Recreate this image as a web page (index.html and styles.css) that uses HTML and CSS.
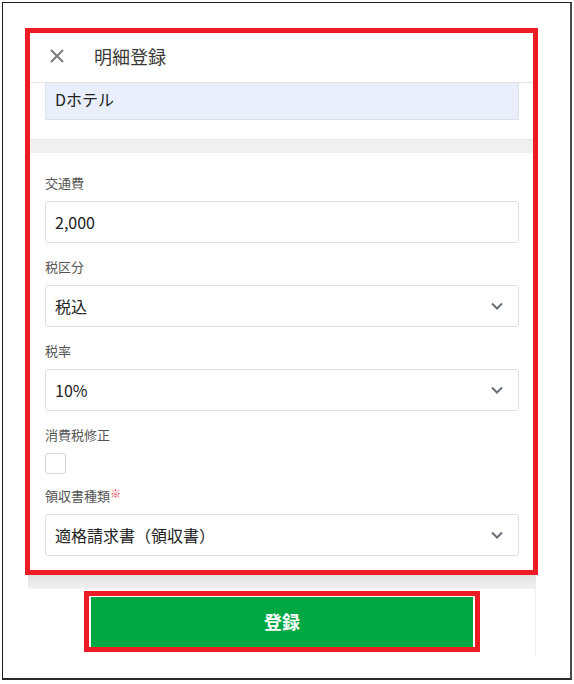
FILE: index.html
```html
<!DOCTYPE html>
<html lang="ja">
<head>
<meta charset="utf-8">
<title>明細登録</title>
<link rel="stylesheet" href="styles.css">
</head>
<body>
<div class="frame">
  <div class="annot">
    <div class="header">
      <svg class="close" width="16" height="16" viewBox="0 0 16 16"><path d="M2 2 L14 14 M14 2 L2 14" stroke="#7a7a7a" stroke-width="2" fill="none"/></svg>
      <span class="title">明細登録</span>
    </div>
    <div class="pad">
      <div class="hotel">Dホテル</div>
    </div>
    <div class="band"></div>
    <div class="form">
      <div class="group">
        <div class="label">交通費</div>
        <div class="field">2,000</div>
      </div>
      <div class="group">
        <div class="label">税区分</div>
        <div class="field select">税込<svg class="chev" width="12" height="8" viewBox="0 0 12 8"><path d="M1 1.5 L6 6.5 L11 1.5" stroke="#666e78" stroke-width="2" fill="none"/></svg></div>
      </div>
      <div class="group">
        <div class="label">税率</div>
        <div class="field select">10%<svg class="chev" width="12" height="8" viewBox="0 0 12 8"><path d="M1 1.5 L6 6.5 L11 1.5" stroke="#666e78" stroke-width="2" fill="none"/></svg></div>
      </div>
      <div class="group">
        <div class="label">消費税修正</div>
        <div class="check"></div>
      </div>
      <div class="group last">
        <div class="label">領収書種類<span class="req">※</span></div>
        <div class="field select">適格請求書（領収書）<svg class="chev" width="12" height="8" viewBox="0 0 12 8"><path d="M1 1.5 L6 6.5 L11 1.5" stroke="#666e78" stroke-width="2" fill="none"/></svg></div>
      </div>
    </div>
  </div>
  <div class="foot">
    <div class="shade"></div>
    <div class="foot-body">
      <div class="btn-annot">
        <div class="btn">登録</div>
      </div>
    </div>
  </div>
</div>
</body>
</html>
```

FILE: styles.css
```css
html, body {
  margin: 0;
  padding: 0;
  background: #fff;
}
body {
  font-family: "Noto Sans CJK JP", "Noto Sans", "Liberation Sans", sans-serif;
  color: #222;
}
.frame {
  box-sizing: border-box;
  margin: 2px 0 0 2px;
  width: 570px;
  height: 678px;
  border-left: 1px solid #1e1e1e;
  border-top: 1px solid #1e1e1e;
  border-right: 2px solid #4a4a4a;
  border-bottom: 2px solid #2a2a2a;
}
.annot {
  margin: 25px 0 0 22px;
  width: 503px;
  border: 5px solid #ed1c24;
  background: #fff;
}
.header {
  box-sizing: border-box;
  height: 50px;
  border-bottom: 1px solid #e4e4e4;
  display: flex;
  align-items: center;
  padding: 0 0 4px 19px;
}
.close {
  display: block;
  margin-top: 1px;
}
.title {
  margin-left: 29px;
  font-size: 18px;
  line-height: 24px;
  color: #3a3a3a;
}
.pad {
  padding: 0 14px 19px 15px;
}
.hotel {
  height: 36px;
  background: #e8eefa;
  border-left: 1px solid #dfe3ea;
  border-right: 1px solid #dfe3ea;
  border-bottom: 1px solid #dcdfe4;
  padding-left: 9px;
  font-size: 16px;
  line-height: 32px;
  color: #222;
}
.band {
  height: 13px;
  background: #f0f0f0;
  border-top: 1px solid #e6e6e6;
}
.form {
  padding: 21px 14px 14px 15px;
}
.group + .group {
  margin-top: 15px;
}
.group.last {
  margin-top: 10px;
}
.label {
  font-size: 13px;
  line-height: 18px;
  color: #555;
  margin-bottom: 9px;
}
.req {
  color: #e8334a;
  font-size: 11px;
  vertical-align: 3px;
}
.field {
  box-sizing: border-box;
  height: 42px;
  border: 1px solid #dedede;
  border-radius: 3px;
  padding: 0 15px 0 9px;
  font-size: 16px;
  line-height: 40px;
  color: #222;
  display: flex;
  align-items: center;
  justify-content: space-between;
}
.chev {
  display: block;
}
.check {
  width: 19px;
  height: 19px;
  border: 1px solid #d6d6d6;
  border-radius: 3px;
}
.foot {
  margin-left: 25px;
  width: 508px;
}
.shade {
  height: 14px;
  background: linear-gradient(#e0e0e0, #f2f2f2);
}
.foot-body {
  height: 67px;
  border-right: 1px solid #efefef;
  padding: 2px 0 0 56px;
  box-sizing: border-box;
}
.btn-annot {
  width: 382px;
  border: 5px solid #ed1c24;
  padding: 1px 2px 0 2px;
  background: #fff;
}
.btn {
  height: 50px;
  background: #00a844;
  color: #fff;
  font-weight: bold;
  font-size: 18px;
  line-height: 48px;
  text-align: center;
}
```
